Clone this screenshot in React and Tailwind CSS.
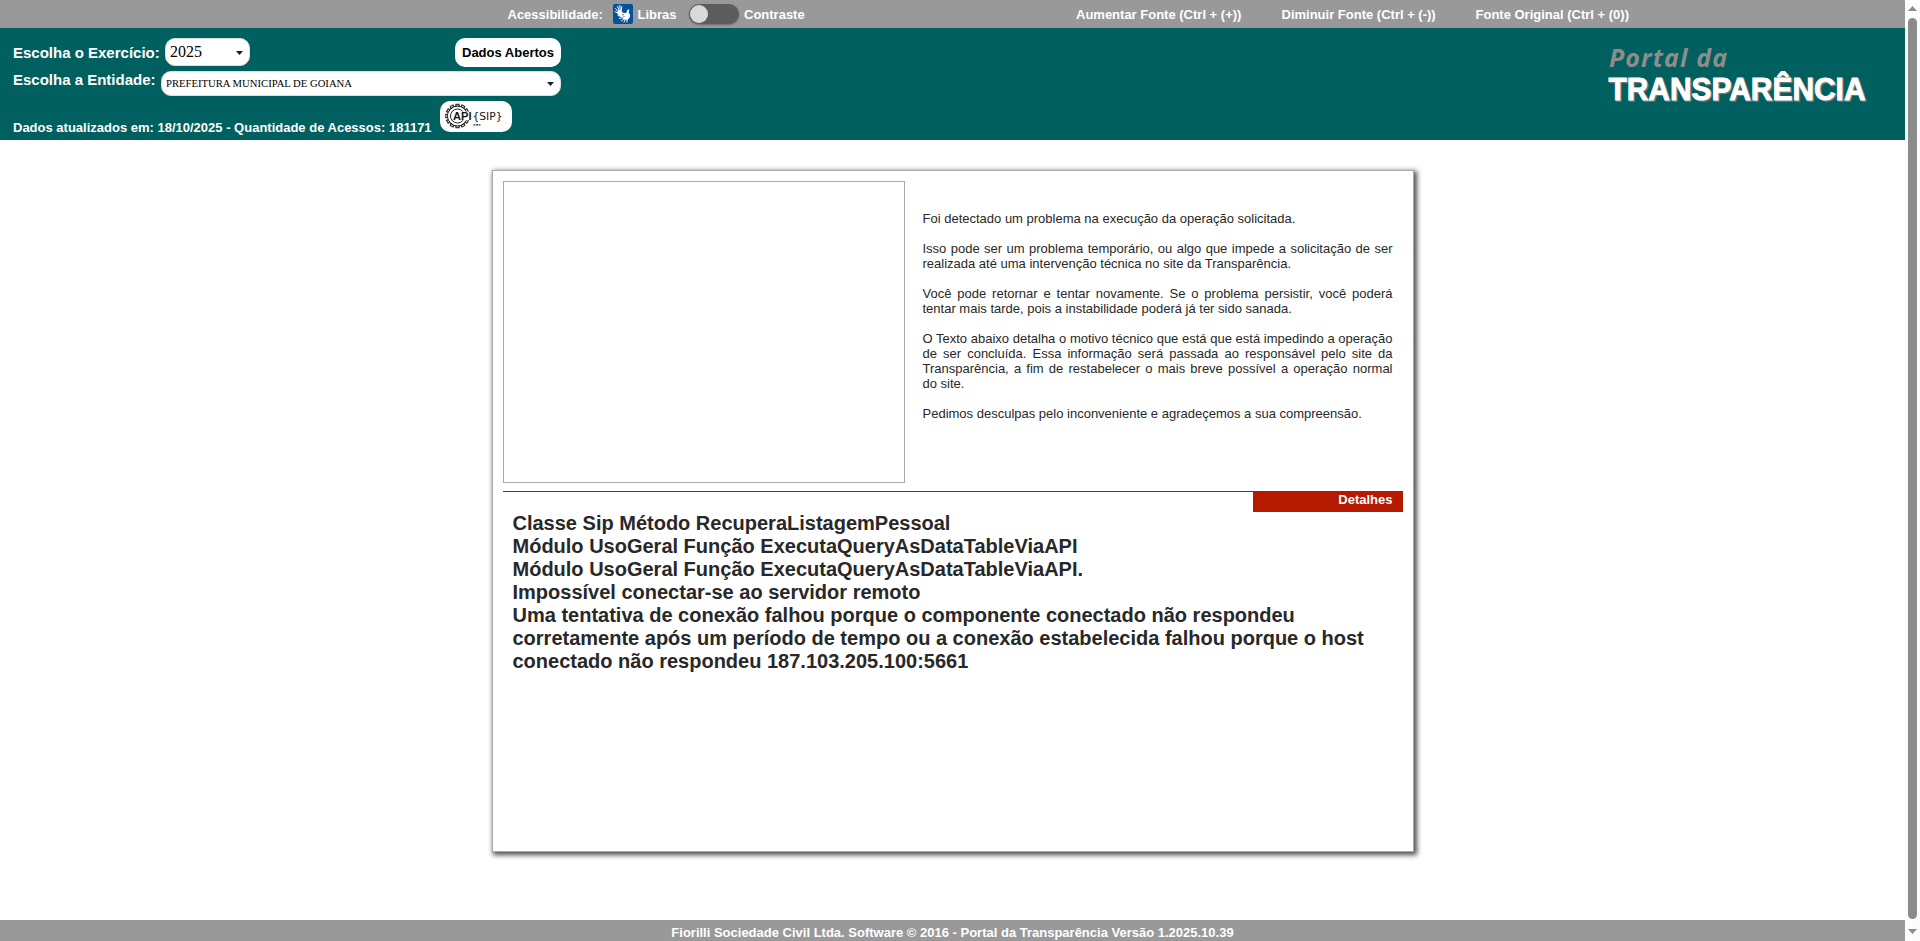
function LibrasIcon() {
  return (
    <svg className="block h-5 w-5 shrink-0" viewBox="0 0 20 20">
      <rect width="20" height="20" rx="2" fill="#05509b" />
      <g stroke="#fff" strokeLinecap="round" fill="none" strokeWidth="1">
        <path d="M4.400 9.200 2 7.600M4.800 7.600 2.600 4.600M6 6.400 4.600 2.400M7.200 6 6.800 1.400M8.300 6.400 8.800 2.600" />
        <path d="M5 11.600 10.500 13M6.400 14.400 10.800 13.600M8.400 17 11.600 14.400M11 18.200 12.800 14.600M14 18 14.200 14.400" />
      </g>
      <path d="M4 8.800 5.600 6l2.900.2 1 2.300 2.200.4.400 1-2.400.2-.4 1 1.200 1.200-1 .8-3.800-1.600z" fill="#fff" />
      <path d="m10 11.600.8-2 2.400-.9 1.600-3.200 1.400.1-.4 3.100 1.300 2-.5 3.200-2 1.700-3.200.1-1.700-1.900 2.100-1z" fill="#fff" />
    </svg>
  );
}

const gearTeeth = [0, 30, 60, 90, 120, 150, 180, 210, 240, 270, 300, 330];

function ApiSipLogo() {
  return (
    <svg className="block h-[31px] w-[72px]" viewBox="0 0 72 31">
      <g fill="#fff" stroke="#222" strokeWidth="1.100">
        {gearTeeth.map((angle) => (
          <rect key={angle} x="15.900" y="3.300" width="3.200" height="4" transform={`rotate(${angle} 17.5 15)`} />
        ))}
        <circle cx="17.500" cy="15" r="9.900" />
      </g>
      <circle cx="17.500" cy="15" r="9.300" fill="#fff" />
      <circle cx="17.500" cy="15" r="7" fill="none" stroke="#222" strokeWidth="1" />
      <rect x="14" y="10.500" width="18" height="8.800" fill="#fff" />
      <text x="13" y="19" fontFamily="Liberation Sans, sans-serif" fontWeight="700" fontSize="11" textLength="18.500" lengthAdjust="spacingAndGlyphs" fill="#151515">API</text>
      <text x="32.500" y="19.200" fontFamily="DejaVu Sans, sans-serif" fontWeight="400" fontSize="11" textLength="30" lengthAdjust="spacingAndGlyphs" fill="#151515">{"{SIP}"}</text>
      <path d="M33.500 23.800h7" stroke="#333" strokeWidth="1.200" strokeDasharray="2 .5" />
    </svg>
  );
}

function Caret({ className }) {
  return (
    <svg className={className} viewBox="0 0 7 4">
      <path d="M0 0h7L3.500 4z" fill="#1b1b33" />
    </svg>
  );
}

function TopBar() {
  return (
    <div className="flex h-7 items-center bg-[#999] pl-[507.500px] text-[13px] font-bold leading-[15px] text-white">
      <span className="w-[105.500px]">Acessibilidade:</span>
      <LibrasIcon />
      <span className="ml-[4.500px] w-[51.500px]">Libras</span>
      <span className="flex h-5 w-[50px] items-center rounded-full bg-[#5d5d5d] p-px shadow-[0_1px_2px_rgba(0,0,0,0.3)]">
        <span className="h-[18px] w-[18px] rounded-full bg-[#dadada]" />
      </span>
      <span className="ml-[5px] w-[332px]">Contraste</span>
      <span className="w-[205.500px]">Aumentar Fonte (Ctrl + (+))</span>
      <span className="w-[194px]">Diminuir Fonte (Ctrl + (-))</span>
      <span>Fonte Original (Ctrl + (0))</span>
    </div>
  );
}

function Header() {
  return (
    <header className="flex h-28 justify-between bg-[#00605f] pl-[13px] pt-[10px]">
      <div className="w-[548px] font-bold text-white">
        <div className="flex h-[33px] items-start">
          <span className="w-[152px] pt-[6px] text-[15px] leading-[17px]">Escolha o Exercício:</span>
          <div className="flex h-7 w-[85px] items-center justify-between rounded-[10px] border border-[#ddd] bg-white pl-1 pr-[6px] font-['Liberation_Serif',serif] text-base font-normal text-black">
            2025
            <Caret className="mt-px h-1 w-[7px]" />
          </div>
          <button className="ml-auto h-[29px] w-[106px] rounded-[10px] bg-white text-[13px] font-bold text-black">Dados Abertos</button>
        </div>
        <div className="flex h-[30px] items-start">
          <span className="w-[148px] text-[15px] leading-[17px]">Escolha a Entidade:</span>
          <div className="flex h-[25px] w-[400px] items-center justify-between rounded-[10px] border border-[#ddd] bg-white pl-1 pr-[6px] font-['Liberation_Serif',serif] text-[10.667px] font-normal text-black">
            PREFEITURA MUNICIPAL DE GOIANA
            <Caret className="h-1 w-[7px]" />
          </div>
        </div>
        <div className="flex h-[31px] items-end">
          <span className="mb-[-3px] w-[427px] text-[13px] leading-[15px]">Dados atualizados em: 18/10/2025 - Quantidade de Acessos: 181171</span>
          <div className="h-[31px] w-[72px] rounded-[10px] bg-white">
            <ApiSipLogo />
          </div>
        </div>
      </div>
      <svg className="mr-[35px] block h-[80px] w-[265px] overflow-visible" viewBox="0 0 265 80">
        <text x="4" y="29" fontFamily="Open Sans, sans-serif" fontSize="25" fontStyle="italic" fontWeight="700" textLength="118" fill="#8d8d8d">Portal da</text>
        <text x="4.500" y="63.200" fontFamily="Liberation Sans, sans-serif" fontSize="31" fontWeight="700" textLength="257" lengthAdjust="spacingAndGlyphs" fill="#757575" stroke="#757575" strokeWidth="1.400">TRANSPARÊNCIA</text>
        <text x="3.500" y="62" fontFamily="Liberation Sans, sans-serif" fontSize="31" fontWeight="700" textLength="257" lengthAdjust="spacingAndGlyphs" fill="#fff" stroke="#fff" strokeWidth="0.900">TRANSPARÊNCIA</text>
      </svg>
    </header>
  );
}

const details = [
  "Classe Sip Método RecuperaListagemPessoal",
  "Módulo UsoGeral Função ExecutaQueryAsDataTableViaAPI",
  "Módulo UsoGeral Função ExecutaQueryAsDataTableViaAPI.",
  "Impossível conectar-se ao servidor remoto",
  "Uma tentativa de conexão falhou porque o componente conectado não respondeu corretamente após um período de tempo ou a conexão estabelecida falhou porque o host conectado não respondeu 187.103.205.100:5661",
];

function ErrorCard() {
  return (
    <main className="ml-[492px] mt-[30px] h-[682px] w-[922px] border border-[#a9a9a9] bg-white p-[10px] text-[#282828] shadow-[2px_2px_5px_1px_rgba(0,0,0,0.7)]">
      <div className="flex h-[310px]">
        <div className="h-[302px] w-[402px] border border-[#a9a9a9]" />
        <div className="ml-[17.500px] flex w-[470px] flex-col gap-[15px] pt-[30px] text-justify text-[13px] leading-[15px]">
          <p>Foi detectado um problema na execução da operação solicitada.</p>
          <p>Isso pode ser um problema temporário, ou algo que impede a solicitação de ser realizada até uma intervenção técnica no site da Transparência.</p>
          <p>Você pode retornar e tentar novamente. Se o problema persistir, você poderá tentar mais tarde, pois a instabilidade poderá já ter sido sanada.</p>
          <p>O Texto abaixo detalha o motivo técnico que está que está impedindo a operação de ser concluída. Essa informação será passada ao responsável pelo site da Transparência, a fim de restabelecer o mais breve possível a operação normal do site.</p>
          <p>Pedimos desculpas pelo inconveniente e agradeçemos a sua compreensão.</p>
        </div>
      </div>
      <div className="flex h-[21px] justify-end border-t border-[#b51a00]">
        <div className="h-5 w-[150px] bg-[#b51a00] pr-[10.500px] text-right text-[13px] font-bold leading-[15px] text-white">Detalhes</div>
      </div>
      <div className="px-[9.500px] text-xl font-bold leading-[23px]">
        {details.map((line) => (
          <p key={line}>{line}</p>
        ))}
      </div>
    </main>
  );
}

function Scrollbar() {
  return (
    <div className="flex h-[941px] w-[15px] flex-col items-center bg-[#fcfcfc]">
      <svg className="mt-[6px] block h-[5px] w-[9px]" viewBox="0 0 9 5">
        <path d="M0 5h9L4.500 0z" fill="#8b8b8b" />
      </svg>
      <div className="mt-[7px] h-[901px] w-[9px] rounded-full bg-[#8b8b8b]" />
      <svg className="mt-[10px] block h-[5px] w-[9px]" viewBox="0 0 9 5">
        <path d="M0 0h9L4.500 5z" fill="#8b8b8b" />
      </svg>
    </div>
  );
}

export default function App() {
  return (
    <div className="flex h-[941px] w-[1920px] overflow-hidden bg-white font-['Liberation_Sans',sans-serif]">
      <div className="flex w-[1905px] flex-col">
        <TopBar />
        <Header />
        <ErrorCard />
        <footer className="mt-auto h-[21px] bg-[#999] pt-[5px] text-center text-[13px] font-bold leading-[15px] text-white">
          Fiorilli Sociedade Civil Ltda. Software © 2016 - Portal da Transparência Versão 1.2025.10.39
        </footer>
      </div>
      <Scrollbar />
    </div>
  );
}
